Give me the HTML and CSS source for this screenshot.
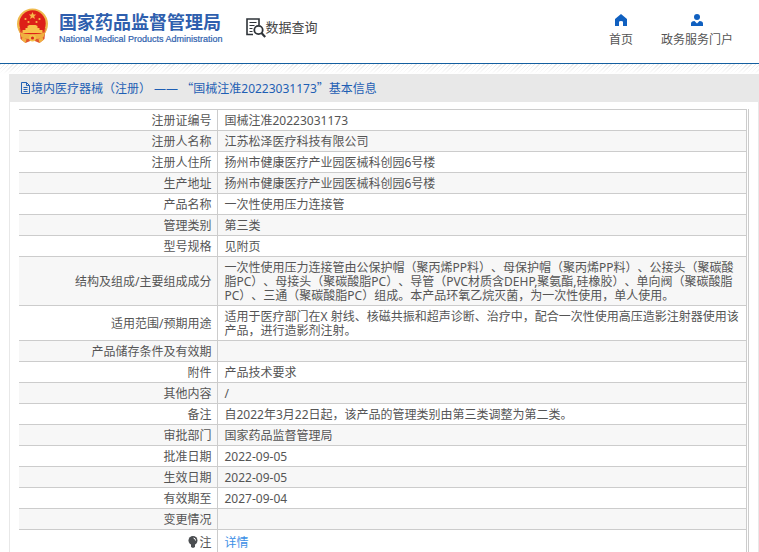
FILE: index.html
```
<!DOCTYPE html>
<html lang="zh-CN">
<head>
<meta charset="utf-8">
<title>国家药品监督管理局 数据查询</title>
<link rel="stylesheet" href="styles.css">
</head>
<body>
<header class="top">
  <a class="brand" href="#">
    <svg class="emblem" viewBox="0 0 32 36" aria-hidden="true">
      <circle cx="16" cy="16" r="15.5" fill="#efb94c"/>
      <path d="M3 20 4 31l5 4 7-3 7 3 5-4 1-11z" fill="#e2552c"/>
      <circle cx="16" cy="15.500" r="13.200" fill="#dd2018"/>
      <path d="m16 4 1.100 2.400 2.600.2-2 1.700.7 2.600-2.400-1.400-2.400 1.400.7-2.600-2-1.700 2.600-.2z" fill="#f8b94a"/>
      <g fill="#f8b94a"><circle cx="9" cy="11" r="1.100"/><circle cx="23" cy="11" r="1.100"/><circle cx="12" cy="14" r="1.100"/><circle cx="20" cy="14" r="1.100"/></g>
      <path d="M11 20v-2l2-1h6l2 1v2h2v2h3v3H6v-3h3v-2z" fill="#f8c24c"/>
      <path d="M3 24c6 3 20 3 26 0l-2 5c-5 3-17 3-22 0z" fill="#f0b040"/>
      <circle cx="16" cy="30" r="3.500" fill="#f3c04a"/>
      <circle cx="16" cy="30" r="1.500" fill="#d9231c"/>
      <path d="m6 29 4 2-1 4-4-3zm20 0-4 2 1 4 4-3z" fill="#f0b040"/>
    </svg>
    <span class="names">
      <span class="name-zh">国家药品监督管理局</span>
      <span class="name-en">National Medical Products Administration</span>
    </span>
  </a>
  <a class="query" href="#">
    <svg class="query-icon" viewBox="0 0 20 20" fill="none" stroke="#2e3338" aria-hidden="true">
      <path d="M7 16.500H1V1h12v6" stroke-width="1.600"/>
      <path d="M3.500 4.500h7M3.500 7.500h5M3.500 10.500h3M3.500 13.500h3" stroke-width="1.200"/>
      <circle cx="12.500" cy="12" r="4.200" stroke-width="1.800"/>
      <path d="m15.500 15 3.700 4" stroke-width="2.200"/>
    </svg>
    <span>数据查询</span>
  </a>
  <nav class="links">
    <a class="link" href="#">
      <svg class="link-icon" viewBox="0 0 12 12" aria-hidden="true"><path d="M6 0 0 5v7h4V8q0-1 2-1t2 1v4h4V5z" fill="#1060c0"/></svg>
      <span>首页</span>
    </a>
    <a class="link" href="#">
      <svg class="link-icon" viewBox="0 0 12 12" aria-hidden="true"><circle cx="6" cy="3" r="3" fill="#1060c0"/><path d="M0 12V9.500Q0 7 3.500 7L6 9.500 8.500 7Q12 7 12 9.500V12z" fill="#1060c0"/></svg>
      <span>政务服务门户</span>
    </a>
  </nav>
</header>
<div class="hatch"></div>
<main class="panel">
  <h1 class="title">
    <svg class="doc" viewBox="0 0 11 12" fill="none" stroke="#2563b5" aria-hidden="true"><path d="M1.500.5h5l3 3v8h-8zM6.500.5v3h3M3.500 5.500h4M3.500 7.500h4M3.500 9.500h4"/></svg>
    <span>境内医疗器械（注册） —— <span class="zh">“</span>国械注准20223031173<span class="zh">”</span>基本信息</span>
  </h1>
  <div class="frame">
    <table class="info">
      <tbody>
        <tr><th scope="row">注册证编号</th><td>国械注准20223031173</td></tr>
        <tr><th scope="row">注册人名称</th><td>江苏松泽医疗科技有限公司</td></tr>
        <tr><th scope="row">注册人住所</th><td>扬州市健康医疗产业园医械科创园6号楼</td></tr>
        <tr><th scope="row">生产地址</th><td>扬州市健康医疗产业园医械科创园6号楼</td></tr>
        <tr><th scope="row">产品名称</th><td>一次性使用压力连接管</td></tr>
        <tr><th scope="row">管理类别</th><td>第三类</td></tr>
        <tr><th scope="row">型号规格</th><td>见附页</td></tr>
        <tr><th scope="row">结构及组成/主要组成成分</th><td>一次性使用压力连接管由公保护帽（聚丙烯PP料）、母保护帽（聚丙烯PP料）、公接头（聚碳酸脂PC）、母接头（聚碳酸脂PC）、导管（PVC材质含DEHP,聚氨酯,硅橡胶）、单向阀（聚碳酸脂PC）、三通（聚碳酸脂PC）组成。本产品环氧乙烷灭菌，为一次性使用，单人使用。</td></tr>
        <tr><th scope="row">适用范围/预期用途</th><td>适用于医疗部门在X 射线、核磁共振和超声诊断、治疗中，配合一次性使用高压造影注射器使用该产品，进行造影剂注射。</td></tr>
        <tr><th scope="row">产品储存条件及有效期</th><td></td></tr>
        <tr><th scope="row">附件</th><td>产品技术要求</td></tr>
        <tr><th scope="row">其他内容</th><td>/</td></tr>
        <tr><th scope="row">备注</th><td>自2022年3月22日起，该产品的管理类别由第三类调整为第二类。</td></tr>
        <tr><th scope="row">审批部门</th><td>国家药品监督管理局</td></tr>
        <tr><th scope="row">批准日期</th><td>2022-09-05</td></tr>
        <tr><th scope="row">生效日期</th><td>2022-09-05</td></tr>
        <tr><th scope="row">有效期至</th><td>2027-09-04</td></tr>
        <tr><th scope="row">变更情况</th><td></td></tr>
        <tr class="note"><th scope="row"><svg class="bulb" viewBox="0 0 10 12" aria-hidden="true"><circle cx="5" cy="4.500" r="4.500" fill="#4a4d50"/><path d="M3 8h4v3L5 12 3 11z" fill="#4a4d50"/><path d="M5.500 2q2 .3 2 2.500" fill="none" stroke="#fff"/></svg>注</th><td><a class="detail" href="#">详情</a></td></tr>
      </tbody>
    </table>
  </div>
</main>
</body>
</html>
```
FILE: styles.css
```
* { box-sizing: border-box; }

body {
  margin: 0;
  background: #fff;
  color: #555;
  font: 12px/14px "Noto Sans", "Noto Sans CJK SC", sans-serif;
  text-spacing-trim: space-all;
}

a { color: inherit; text-decoration: none; }
svg { display: block; flex: none; }

.top {
  display: flex;
  align-items: flex-start;
  height: 64px;
  padding: 8px 26px 0 16px;
  border-bottom: 1px solid #145fa0;
}

.brand { display: flex; gap: 10px; color: #2f5fae; }
.emblem { width: 33px; height: 36px; }
.names { display: flex; flex-direction: column; padding-top: 4px; white-space: nowrap; }
.name-zh { font-size: 18px; line-height: 20px; font-weight: 700; }
.name-en { font: 9px/14px "Liberation Sans", sans-serif; -webkit-text-stroke: 0.2px; }

.query {
  display: flex;
  margin: 10px 0 0 23px;
  color: #444;
  font-size: 13px;
  line-height: 18px;
}
.query-icon { width: 20px; height: 20px; }

.links { display: flex; gap: 28px; margin-left: auto; padding-top: 6px; }
.link { display: flex; flex-direction: column; align-items: center; gap: 7px; }
.link-icon { width: 12px; height: 12px; }

.hatch {
  height: 10px;
  background: repeating-linear-gradient(135deg, #e8e8e8 0 1px, #fff 1px 3px);
  -webkit-mask: linear-gradient(#000, transparent);
  mask: linear-gradient(#000, transparent);
}

.panel {
  margin: 0 0 0 9px;
  border: solid #e8e8e8;
  border-width: 0 1px;
}
.title {
  display: flex;
  align-items: center;
  height: 28px;
  margin: 0;
  padding: 0 10px;
  background: #e8e8e8;
  color: #1f5fb4;
  font-size: 12px;
  font-weight: 400;
}
.doc { width: 11px; height: 12px; }
.zh { font-family: "Noto Sans CJK SC", sans-serif; }

.frame {
  margin: 7px 9px 0;
  padding-right: 1px;
  border-right: 1px solid #ccc;
}
.info {
  width: 100%;
  border-collapse: collapse;
  border-top: 1px solid #ccc;
}
.info th, .info td {
  height: 21px;
  padding: 4px 5px 2px 7px;
  border: 1px solid #ccc;
  font-weight: 400;
  vertical-align: middle;
}
.info th { width: 198px; border-left: 0; text-align: right; }
.info td { text-align: left; }
.info tr:nth-child(even) { background: #f7f7f7; }
.info .note th, .info .note td { height: 23px; padding-top: 6px; border-bottom: 0; }
.bulb { display: inline-block; width: 10px; height: 12px; margin-right: 1px; vertical-align: -1px; }
.detail { color: #3c8fe6; }
```
